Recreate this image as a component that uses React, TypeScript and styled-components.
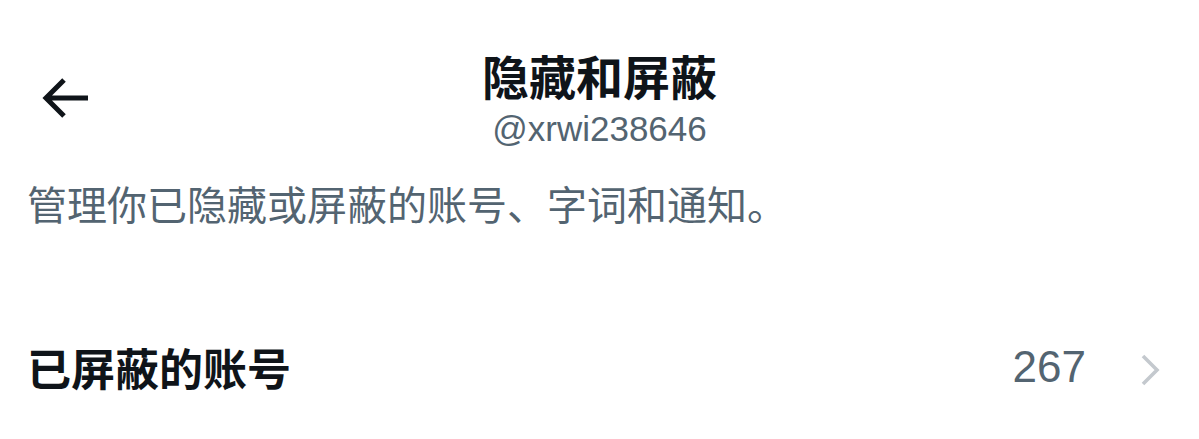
import styled, { createGlobalStyle } from "styled-components";

const GlobalStyle = createGlobalStyle`
    html, body {
        margin: 0;
        padding: 0;
        background: #ffffff;
    }
    body {
        font-family: "Noto Sans CJK SC", "Noto Sans", sans-serif;
        color: #0f1419;
    }
`;

const Page = styled.div`
    width: 1199px;
    height: 439px;
    overflow: hidden;
    padding: 0 27px;
    box-sizing: border-box;
`;

const Header = styled.header`
    display: grid;
    grid-template-columns: 1fr auto 1fr;
    align-items: center;
    padding-top: 47px;
`;

const BackButton = styled.button`
    justify-self: start;
    margin-left: 14px;
    width: 50px;
    height: 50px;
    padding: 0;
    border: none;
    background: none;
    display: flex;
    align-items: center;
    justify-content: center;
    color: #0f1419;
    cursor: pointer;
`;

const TitleBlock = styled.div`
    display: flex;
    flex-direction: column;
    align-items: center;
`;

const Title = styled.h1`
    margin: 0;
    font-size: 47px;
    font-weight: 700;
    line-height: 56px;
    letter-spacing: 0;
`;

const Handle = styled.div`
    font-family: "Liberation Sans", Arial, sans-serif;
    font-size: 35px;
    line-height: 40px;
    color: #536471;
    margin-top: 6px;
`;

const Description = styled.p`
    margin: 28px 0 0;
    font-size: 40px;
    line-height: 52px;
    color: #536471;
`;

const Row = styled.div`
    display: flex;
    align-items: center;
    margin-top: 108px;
    height: 60px;
`;

const RowLabel = styled.span`
    flex: 1;
    font-size: 44px;
    font-weight: 700;
    line-height: 60px;
`;

const RowValue = styled.span`
    font-family: "Liberation Sans", Arial, sans-serif;
    font-size: 44px;
    line-height: 60px;
    color: #536471;
    margin-right: 54px;
`;

const Chevron = styled.span`
    display: flex;
    margin: 6px 12px 0 0;
    color: #c4c9ce;
`;

export default function App() {
    return (
        <>
            <GlobalStyle />
            <Page>
                <Header>
                    <BackButton aria-label="返回">
                        <svg width="48" height="42" viewBox="0 0 48 42" fill="none">
                            <path d="M46 21H5M22 3L4 21l18 18" stroke="currentColor" strokeWidth="5" />
                        </svg>
                    </BackButton>
                    <TitleBlock>
                        <Title>隐藏和屏蔽</Title>
                        <Handle>@xrwi238646</Handle>
                    </TitleBlock>
                    <div />
                </Header>
                <Description>管理你已隐藏或屏蔽的账号、字词和通知。</Description>
                <Row>
                    <RowLabel>已屏蔽的账号</RowLabel>
                    <RowValue>267</RowValue>
                    <Chevron>
                        <svg width="20" height="32" viewBox="0 0 20 32" fill="none">
                            <path d="M3 2l14 14L3 30" stroke="currentColor" strokeWidth="3.6" />
                        </svg>
                    </Chevron>
                </Row>
            </Page>
        </>
    );
}
